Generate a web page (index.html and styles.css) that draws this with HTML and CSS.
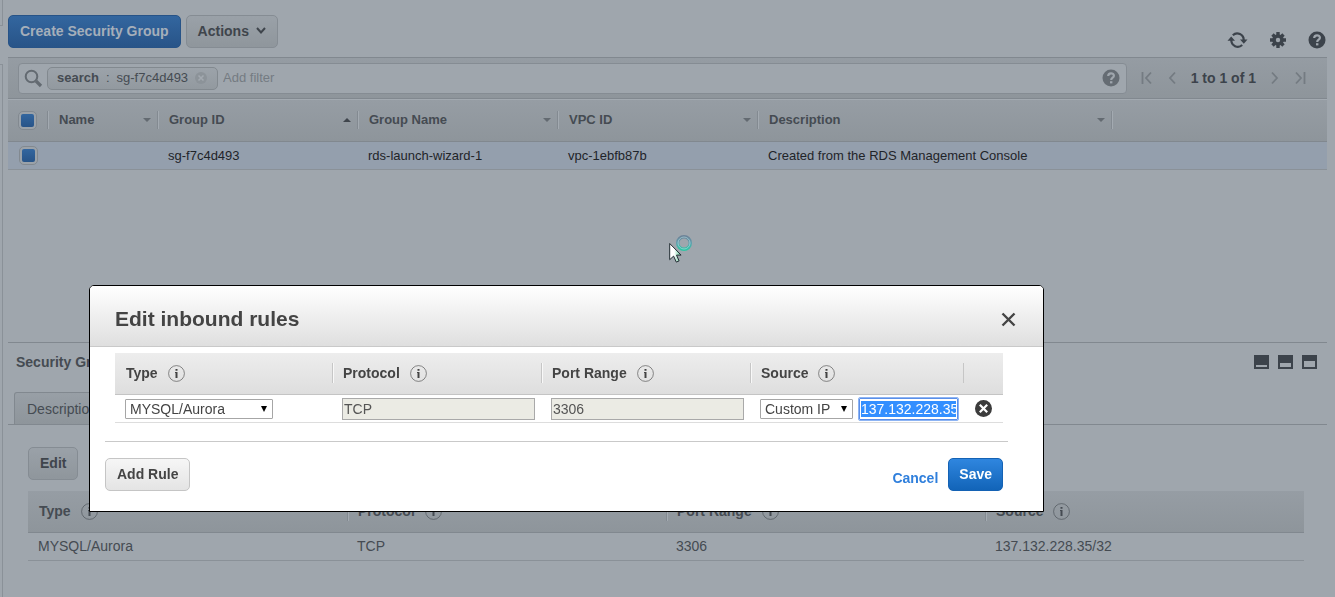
FILE: index.html
```html
<!DOCTYPE html>
<html lang="en">
<head>
<meta charset="utf-8">
<title>Security Groups</title>
<link rel="stylesheet" href="styles.css">
</head>
<body>
<div class="app">
  <div class="rail"><div class="rail-top"></div><div class="rail-body"></div></div>
  <main class="main">
    <header class="toolbar">
      <button class="btn btn-dimblue" type="button">Create Security Group</button>
      <button class="btn btn-dim" type="button">Actions
        <svg width="10" height="8" viewBox="0 0 10 8"><path d="M1 1 5 5.500 9 1" fill="none" stroke="#3f454c" stroke-width="2"/></svg>
      </button>
      <div class="tools">
        <button class="icon" type="button" aria-label="Refresh"><svg width="21" height="18" viewBox="0 0 21 18"><g fill="none" stroke="#3c434b" stroke-width="2.2"><path d="M5.800 4.200a6.500 6.500 0 0 1 10.900 5"/><path d="M15.200 14a6.500 6.500 0 0 1-10.900-5"/></g><path d="M13 8.500h7.500l-3.700 4.200zM.5 9.700H8L4.200 5.500z" fill="#3c434b"/></svg></button>
        <button class="icon" type="button" aria-label="Settings"><svg width="16" height="16" viewBox="0 0 16 16"><g stroke="#3c434b" stroke-width="3.4"><path d="M8 0v16M0 8h16M2.500 2.500l11 11M13.500 2.500l-11 11"/></g><circle cx="8" cy="8" r="5.800" fill="#3c434b"/><circle cx="8" cy="8" r="2.200" fill="#9fa6ad"/></svg></button>
        <button class="icon" type="button" aria-label="Help"><svg width="18" height="18" viewBox="0 0 18 18"><circle cx="9" cy="9" r="8.500" fill="#3c434b"/><path d="M6.200 7c0-3.600 5.700-3.400 5.700-.3 0 1.900-2.700 2-2.700 4.300" fill="none" stroke="#9fa6ad" stroke-width="2.200"/><path d="M8 12.200h2.400v2.200H8z" fill="#9fa6ad"/></svg></button>
      </div>
    </header>

    <div class="filterbar">
      <div class="search">
        <svg width="19" height="19" viewBox="0 0 19 19"><circle cx="7.500" cy="7.500" r="5.800" fill="none" stroke="#636a71" stroke-width="2"/><path d="M12 12l5 5" stroke="#636a71" stroke-width="3.200"/></svg>
        <span class="token"><b>search</b><span>:</span><span>sg-f7c4d493</span>
          <svg width="12" height="12" viewBox="0 0 12 12"><circle cx="6" cy="6" r="6" fill="#8c9399"/><path d="M3.500 3.500l5 5M8.500 3.500l-5 5" stroke="#a3a9b0" stroke-width="1.600"/></svg></span>
        <input class="filter" type="text" placeholder="Add filter" aria-label="Add filter">
        <svg width="18" height="18" viewBox="0 0 18 18"><circle cx="9" cy="9" r="8.500" fill="#656c73"/><path d="M6.200 7c0-3.600 5.700-3.400 5.700-.3 0 1.900-2.700 2-2.700 4.300" fill="none" stroke="#9fa6ad" stroke-width="2.200"/><path d="M8 12.200h2.400v2.200H8z" fill="#9fa6ad"/></svg>
      </div>
      <nav class="pager">
        <button class="icon" type="button" aria-label="First"><svg width="12" height="14" viewBox="0 0 12 14"><path d="M1.500 1v12M10 1.500 5 7l5 5.500" fill="none" stroke="#747b82" stroke-width="1.800"/></svg></button>
        <button class="icon" type="button" aria-label="Previous"><svg width="8" height="14" viewBox="0 0 8 14"><path d="M7 1.500 2 7l5 5.500" fill="none" stroke="#747b82" stroke-width="1.800"/></svg></button>
        <b>1 to 1 of 1</b>
        <button class="icon" type="button" aria-label="Next"><svg width="8" height="14" viewBox="0 0 8 14"><path d="M1 1.500 6 7l-5 5.500" fill="none" stroke="#747b82" stroke-width="1.800"/></svg></button>
        <button class="icon" type="button" aria-label="Last"><svg width="12" height="14" viewBox="0 0 12 14"><path d="M10.500 1v12M2 1.500 7 7l-5 5.500" fill="none" stroke="#747b82" stroke-width="1.800"/></svg></button>
      </nav>
    </div>

    <div class="groups">
      <table class="grid">
        <colgroup><col class="c-check"><col class="c-name"><col class="c-mid"><col class="c-mid"><col class="c-mid"><col class="c-desc"><col></colgroup>
        <thead><tr>
          <th><input class="check" type="checkbox" checked aria-label="Select all"></th>
          <th><div class="head">Name<i class="sort"></i></div></th>
          <th><div class="head">Group ID<i class="sort up"></i></div></th>
          <th><div class="head">Group Name<i class="sort"></i></div></th>
          <th><div class="head">VPC ID<i class="sort"></i></div></th>
          <th><div class="head">Description<i class="sort"></i></div></th>
          <th><div class="head"></div></th>
        </tr></thead>
        <tbody><tr>
          <td><input class="check" type="checkbox" checked aria-label="Select sg-f7c4d493"></td>
          <td></td><td>sg-f7c4d493</td><td>rds-launch-wizard-1</td><td>vpc-1ebfb87b</td><td>Created from the RDS Management Console</td><td></td>
        </tr></tbody>
      </table>
    </div>

    <section class="detail">
      <div class="detail-head">
        <b>Security Group</b>
        <div class="layouts">
          <button class="icon" type="button" aria-label="Small pane"><svg width="15" height="14" viewBox="0 0 15 14"><path d="M0 0h15v14H0zM2 10v2h11v-2z" fill="#3c434b" fill-rule="evenodd"/></svg></button>
          <button class="icon" type="button" aria-label="Half pane"><svg width="15" height="14" viewBox="0 0 15 14"><path d="M0 0h15v14H0zM2 8v4h11V8z" fill="#3c434b" fill-rule="evenodd"/></svg></button>
          <button class="icon" type="button" aria-label="Full pane"><svg width="15" height="14" viewBox="0 0 15 14"><path d="M0 0h15v14H0zM2 6v6h11V6z" fill="#3c434b" fill-rule="evenodd"/></svg></button>
        </div>
      </div>
      <div class="tabs"><button class="tab" type="button">Description</button></div>
      <div class="detail-body">
        <button class="btn btn-dim" type="button">Edit</button>
        <table class="rules rules-dim">
          <thead><tr>
            <th><div class="rhead">Type <span class="info"><svg width="17" height="17" viewBox="0 0 17 17"><use href="#info"/></svg></span></div></th>
            <th><div class="rhead">Protocol <span class="info"><svg width="17" height="17" viewBox="0 0 17 17"><use href="#info"/></svg></span></div></th>
            <th><div class="rhead">Port Range <span class="info"><svg width="17" height="17" viewBox="0 0 17 17"><use href="#info"/></svg></span></div></th>
            <th><div class="rhead">Source <span class="info"><svg width="17" height="17" viewBox="0 0 17 17"><use href="#info"/></svg></span></div></th>
          </tr></thead>
          <tbody><tr><td>MYSQL/Aurora</td><td>TCP</td><td>3306</td><td>137.132.228.35/32</td></tr></tbody>
        </table>
      </div>
    </section>
  </main>
</div>

<svg class="defs" width="0" height="0"><defs><g id="info"><circle cx="8.500" cy="8.500" r="7.900" fill="none" stroke="currentColor" stroke-opacity=".6"/><path d="M7.500 4h2v1.800h-2zM7 7h2.500v6h-2V8H7z" fill="currentColor"/></g></defs></svg>

<svg class="cursor" width="24" height="28" viewBox="0 0 24 28"><defs><linearGradient id="ring" x1="0" y1="0" x2="0" y2="1"><stop offset="0" stop-color="#6b8398"/><stop offset=".5" stop-color="#5f9fae"/><stop offset="1" stop-color="#2fc4a4"/></linearGradient><linearGradient id="ptr"><stop offset=".4" stop-color="#fff"/><stop offset="1" stop-color="#4fc08c"/></linearGradient></defs><circle cx="15" cy="8" r="6.300" fill="#9fa6ad" stroke="url(#ring)" stroke-width="3.400"/><circle cx="15" cy="8" r="6" fill="none" stroke="#b9dfe4" stroke-opacity=".6"/><path d="M.7 8.500v16.200l3.900-3.600 2.700 6 2.800-1.200-2.600-5.800h4.600z" fill="url(#ptr)" stroke="#222d33"/></svg>

<div class="overlay">
  <div class="modal" role="dialog" aria-labelledby="dlg-title">
    <div class="modal-head">
      <h2 id="dlg-title">Edit inbound rules</h2>
      <button class="icon" type="button" aria-label="Close"><svg width="15" height="15" viewBox="0 0 15 15"><path d="M1.500 1.500l12 12M13.500 1.500l-12 12" stroke="#444" stroke-width="2.400"/></svg></button>
    </div>
    <div class="modal-body">
      <table class="rules rules-edit">
        <colgroup><col class="e-type"><col class="e-mid"><col class="e-mid"><col class="e-source"><col></colgroup>
        <thead><tr>
          <th><div class="rhead">Type <span class="info"><svg width="17" height="17" viewBox="0 0 17 17"><use href="#info"/></svg></span></div></th>
          <th><div class="rhead">Protocol <span class="info"><svg width="17" height="17" viewBox="0 0 17 17"><use href="#info"/></svg></span></div></th>
          <th><div class="rhead">Port Range <span class="info"><svg width="17" height="17" viewBox="0 0 17 17"><use href="#info"/></svg></span></div></th>
          <th><div class="rhead">Source <span class="info"><svg width="17" height="17" viewBox="0 0 17 17"><use href="#info"/></svg></span></div></th>
          <th></th>
        </tr></thead>
        <tbody><tr>
          <td><span class="select select-type"><select aria-label="Type"><option>MYSQL/Aurora</option></select></span></td>
          <td><input class="field" type="text" value="TCP" disabled aria-label="Protocol"></td>
          <td><input class="field" type="text" value="3306" disabled aria-label="Port Range"></td>
          <td><div class="source"><span class="select select-src"><select aria-label="Source"><option>Custom IP</option></select></span><input class="field selected" type="text" value="137.132.228.35/32" aria-label="Source address"></div></td>
          <td><button class="icon remove" type="button" aria-label="Remove rule"><svg width="17" height="17" viewBox="0 0 17 17"><circle cx="8.500" cy="8.500" r="8.500" fill="#3c3c3c"/><path d="M4.800 4.800l7.400 7.400M12.200 4.800l-7.400 7.400" stroke="#fff" stroke-width="2.200"/></svg></button></td>
        </tr></tbody>
      </table>
    </div>
    <div class="modal-foot">
      <button class="btn btn-light" type="button">Add Rule</button>
      <div class="actions"><a href="#">Cancel</a><button class="btn btn-blue" type="button">Save</button></div>
    </div>
  </div>
</div>
</body>
</html>
```
FILE: styles.css
```css
* { box-sizing: border-box; }
body {
  margin: 0;
  background: #9fa6ad;
  color: #454b52;
  font: 14px/18px "Liberation Sans", Arial, sans-serif;
  overflow: hidden;
}
svg { display: block; flex: none; }
button, input, select { font: inherit; color: inherit; }
table { border-collapse: separate; border-spacing: 0; table-layout: fixed; width: 100%; }
th, td { padding: 0; text-align: left; }

.app { display: flex; min-height: 100vh; }
.rail { width: 3px; display: flex; flex-direction: column; gap: 38px; }
.rail-top { height: 26px; border: solid #8a9198; border-width: 0 1px 1px 0; }
.rail-body { flex: 1; border: solid #8a9198; border-width: 1px 1px 0 0; }
.main { flex: 1; min-width: 0; padding: 0 8px 0 5px; display: flex; flex-direction: column; }

.btn {
  height: 33px;
  padding: 0 10px 2px;
  border: 1px solid;
  border-radius: 5px;
  font-weight: bold;
  display: inline-flex;
  align-items: center;
  gap: 7px;
  white-space: nowrap;
}
.btn-dim { color: #3f454c; border-color: #858c93; background: linear-gradient(#9aa1a8, #8f969c); }
.btn-dimblue { color: #a5afba; border-color: #275387; background: linear-gradient(#33669f, #285488); }
.btn-light { color: #444; border-color: #c5c5c5; background: linear-gradient(#f6f6f6, #e4e4e4); }
.btn-blue { color: #fff; border-color: #1462b4; background: linear-gradient(#2f86df, #1264b8); }
.btn-dim, .btn-dimblue, .btn-light { padding-right: 11px; padding-left: 11px; }
.icon { padding: 0; border: 0; background: none; display: block; }

.toolbar { display: flex; gap: 5px; height: 57px; padding-top: 15px; align-items: flex-start; }
.tools { margin: 16px 0 0 auto; display: flex; align-items: center; gap: 22px; padding-right: 1px; }

.filterbar {
  height: 42px;
  padding: 0 21px 0 10px;
  display: flex;
  align-items: center;
  gap: 14px;
  border: solid #81888f;
  border-width: 1px 0;
  background: linear-gradient(#959ca3, #8e959b);
}
.search {
  flex: 1;
  height: 31px;
  padding: 0 6px 0 5px;
  display: flex;
  align-items: center;
  gap: 4px;
  border: 1px solid #858c93;
  border-radius: 4px;
  background: #9fa6ad;
  font-size: 13px;
}
.token {
  height: 23px;
  padding: 0 10px 0 9px;
  display: flex;
  align-items: center;
  gap: 7px;
  border: 1px solid #82898f;
  border-radius: 5px;
  background: linear-gradient(#9ca3aa, #92999f);
}
.filter { flex: 1; min-width: 0; border: 0; padding: 0 1px; background: none; outline: 0; }
.filter::placeholder { color: #747b82; opacity: 1; }
.pager { display: flex; align-items: center; gap: 15px; color: #3c434b; }

.groups { flex: 1; font-size: 13px; }
.c-check { width: 39px; }
.c-name { width: 110px; }
.c-mid { width: 200px; }
.c-desc { width: 354px; }
.grid th { height: 43px; background: linear-gradient(#969da4, #8e959b); border-top: 1px solid #a3aab1; border-bottom: 1px solid #81888f; }
.grid th { padding-bottom: 1px; }
.grid td { height: 28px; padding-left: 11px; background: #949fad; border-bottom: 1px solid #8a9198; color: #1f2429; white-space: nowrap; }
.grid th:first-child { padding-left: 10px; }
.head { height: 18px; padding: 0 6px 0 11px; display: flex; align-items: center; justify-content: space-between; border-left: 1px solid #838a91; box-shadow: inset 1px 0 #a3aab1; }
.sort { border: 4px solid transparent; border-top-color: #636a71; border-bottom: 0; }
.sort.up { border-top: 0; border-bottom: 4px solid #3f454c; }
.check { appearance: none; display: block; width: 19px; height: 19px; margin: 0; padding: 2px; border: 1px solid #828990; border-radius: 5px; background: linear-gradient(#33669f, #285488) content-box, #9ba2a9; }

.detail { border-top: 1px solid #81888f; padding-bottom: 36px; }
.detail-head { height: 49px; padding: 11px 10px 0 8px; display: flex; justify-content: space-between; align-items: flex-start; }
.detail-head b { line-height: 16px; }
.layouts { display: flex; gap: 9px; padding-top: 1px; }
.tabs { height: 33px; padding-left: 6px; border-bottom: 1px solid #81888f; }
.tab { height: 32px; padding: 0 12px; border: 1px solid #81888f; border-bottom: 0; border-radius: 3px 3px 0 0; background: linear-gradient(#989fa6, #8e959b); }
.detail-body { padding: 22px 23px 0 20px; }

.rules td { height: 28px; font-size: 14px; }
.rules th { height: 42px; padding-bottom: 1px; }
.rhead { height: 20px; padding-left: 11px; display: flex; align-items: center; gap: 10px; }
th + th .rhead { padding-left: 10px; border-left: 1px solid #c6c6c6; box-shadow: inset 1px 0 #f8f8f8; }
.rules-dim { margin-top: 11px; }
.rules-dim th { background: linear-gradient(#969da4, #8e959b); border-bottom: 1px solid #81888f; }
.rules-dim th + th .rhead { border-color: #838a91; box-shadow: inset 1px 0 #a3aab1; }
.rules-dim td { padding: 0 0 1px 10px; border-bottom: 1px solid #8a9198; }
.defs { position: absolute; }
.cursor { position: absolute; left: 669px; top: 235px; }

.overlay { position: fixed; inset: 0; padding: 285px 291px 0 89px; pointer-events: none; }
.modal { background: #fff; border: 1px solid #000; border-radius: 5px 5px 0 0; color: #444; pointer-events: auto; overflow: hidden; }
.modal-head { height: 61px; padding: 0 27px 0 25px; display: flex; align-items: center; justify-content: space-between; border-bottom: 1px solid #c9c9c9; background: linear-gradient(#fff, #dfdfdf); }
.modal-head h2 { margin: 6px 0 0; font-size: 21px; line-height: 24px; }
.modal-head .icon { margin-top: 6px; }
.modal-body { margin: 0 35px 0 15px; padding: 6px 5px 18px 10px; border-bottom: 1px solid #c9c9c9; }
.rules-edit th { background: linear-gradient(#ededed, #dedede); border-bottom: 1px solid #c4c4c4; }
.rules-edit th:last-child::before { content: ""; display: block; height: 20px; border-left: 1px solid #c6c6c6; }
.rules-edit td { padding: 0 6px 0 10px; border-bottom: 1px solid #ddd; }
.e-type { width: 217px; }
.e-mid { width: 209px; }
.e-source { width: 213px; }
.select { position: relative; display: block; height: 20px; }
.select::after { content: ""; position: absolute; right: 6px; top: 7px; border: 3px solid transparent; border-top: 6px solid #000; border-bottom: 0; pointer-events: none; }
.select select { display: block; appearance: none; width: 100%; height: 20px; padding: 0 4px; border: 1px solid #a6a6a6; border-radius: 1px; background: #fff; }
.select-type { width: 148px; }
.select-src { width: 93px; flex: none; }
.field { display: block; width: 100%; height: 22px; padding: 1px; border: 1px solid #a9a9a9; }
.field:disabled { background: #ebebe4; color: #545454; }
.source { display: flex; align-items: center; gap: 6px; }
.field.selected { flex: none; width: 99px; border-color: #5a8ee8; outline: 1px solid #8db4f4; border-radius: 1px; padding: 2px 1px; color: #fff; background: #338fff content-box; }
.rules-edit td:last-child { padding: 0 0 0 12px; }
.modal-foot { padding: 16px 40px 20px 15px; display: flex; justify-content: space-between; }
.actions { display: flex; align-items: center; gap: 10px; }
.actions a { padding-top: 6px; color: #2f7fdc; font-weight: bold; text-decoration: none; }
```
